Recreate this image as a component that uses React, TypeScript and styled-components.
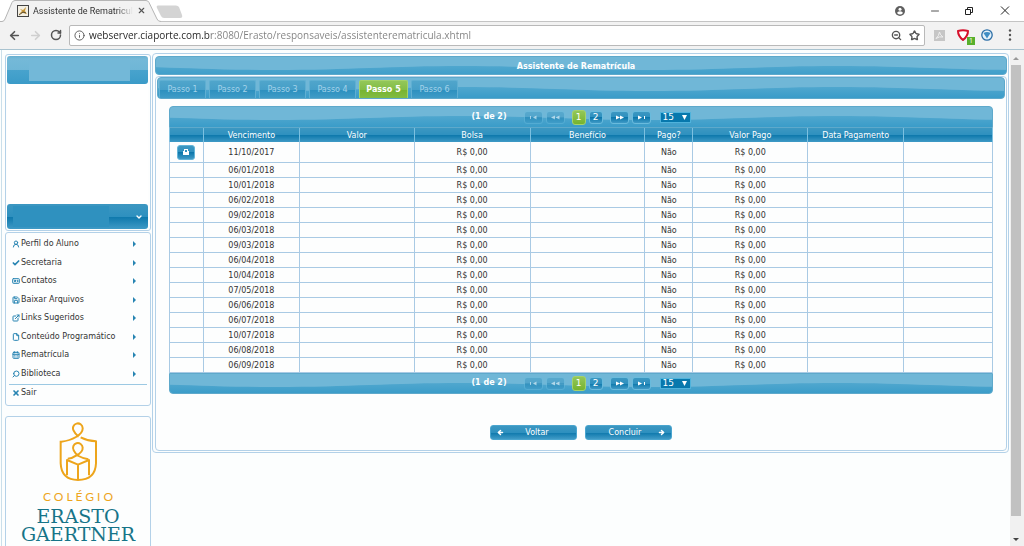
import React from "react";
import styled, { createGlobalStyle, css } from "styled-components";
import {
  ArrowLeft, ArrowRight, RotateCw, Info, ZoomOut, Star, UserRound, Check, IdCard, Save,
  ExternalLink, File, CalendarDays, Search, X, Minus, ChevronDown,
} from "lucide-react";

const ui = '"DejaVu Sans", Verdana, sans-serif';
const chromeUi = '"Open Sans", "Noto Sans", sans-serif';
const line = "#b3d1e8";

const Global = createGlobalStyle`
  *, *::before, *::after { box-sizing: border-box; }
  body { margin: 0; background: #fff; font: 8px/14px ${ui}; color: #333; overflow: hidden; }
  button, input, select { font: inherit; color: inherit; margin: 0; padding: 0; border: 0; background: none; }
  ul { list-style: none; margin: 0; padding: 0; }
  a { color: inherit; text-decoration: none; }
  svg { display: block; flex: none; }
`;

/* ---------- browser window ---------- */

const Window = styled.div`
  height: 100vh;
  display: flex;
  flex-direction: column;
`;

const TabStrip = styled.header`
  position: relative;
  height: 22px;
  flex: none;
  display: flex;
  align-items: center;
  justify-content: space-between;
  padding: 0 11px 0 17px;
  border-bottom: 1px solid #c4c4c4;
  background: #fff;
`;

const TabShape = styled.svg`
  position: absolute;
  left: 0;
  top: 0;
`;

const BrowserTab = styled.div`
  position: relative;
  display: flex;
  align-items: center;
  gap: 4px;
`;

const TabTitle = styled.span`
  width: 100px;
  white-space: nowrap;
  font: 9px/14px Roboto, sans-serif;
  color: #333;
  mask-image: linear-gradient(90deg, #000 84px, transparent);
`;

const IconButton = styled.button<{ $tone?: string }>`
  display: grid;
  place-items: center;
  flex: none;
  color: ${(p) => p.$tone ?? "#555"};
`;

const WindowButtons = styled.div`
  display: flex;
  align-items: center;
  gap: 24px;
`;

const Toolbar = styled.div`
  height: 28px;
  flex: none;
  display: flex;
  align-items: center;
  padding: 0 8px 1px;
  gap: 7px;
  background: #f2f2f2;
  border-bottom: 1px solid #a9c3d0;
`;

const AddressBar = styled.label`
  flex: 1;
  height: 21px;
  display: flex;
  align-items: center;
  gap: 4px;
  padding: 0 4px;
  background: #fff;
  border: 1px solid #b9b9b9;
  border-radius: 2px;
  color: #555;
`;

const AddressInput = styled.input`
  flex: 1;
  min-width: 0;
  height: 18px;
  outline: 0;
  font: 10px/18px ${chromeUi};
  color: transparent;
  background: linear-gradient(90deg, #222 122px, #808080 122px);
  background-clip: text;
  -webkit-background-clip: text;
`;

const NavButtons = styled.div`
  display: flex;
  align-items: center;
  gap: 8px;
`;

const AddressActions = styled.div`
  display: flex;
  align-items: center;
  gap: 7px;
`;

const Extensions = styled.div`
  display: flex;
  align-items: center;
  gap: 11px;
  margin-left: 2px;
`;

const ShieldButton = styled(IconButton)`
  position: relative;
`;

const Badge = styled.span`
  position: absolute;
  right: -5px;
  bottom: -4px;
  width: 8px;
  height: 8px;
  background: #58b02c;
  color: #fff;
  font: 7px/8px ${chromeUi};
`;

/* ---------- page frame ---------- */

const Viewport = styled.div`
  flex: 1;
  min-height: 0;
  display: flex;
  background: #fcfefe;
`;

const Page = styled.div`
  flex: 1;
  min-width: 0;
  display: flex;
  align-items: flex-start;
  gap: 1px;
  margin-left: 1px;
  padding: 3px 0 0 3px;
  border-left: 1px solid #cadfea;
`;

const Scrollbar = styled.div`
  width: 14px;
  margin-left: 1px;
  flex: none;
  display: flex;
  flex-direction: column;
  align-items: center;
  justify-content: space-between;
  padding: 7px 2px 5px 0;
  background: #f1f1f1;
`;

const Thumb = styled.div`
  flex: 1;
  width: 10px;
  margin: 5px 0 22px;
  background: #c1c1c1;
`;

const Sidebar = styled.aside`
  width: 146px;
  flex: none;
  padding-top: 1px;
  display: flex;
  flex-direction: column;
`;

const Panel = styled.section`
  border: 1px solid ${line};
  border-radius: 3px;
  padding: 1px 2px 1px 1px;
  background: #fdfefe;
`;

const glossLight = "linear-gradient(#66afd0 0, #74b9d8 3px, #6fb6d6 50%, #48a3cd 50%, #3b9bc8 100%)";
const glossDark = "linear-gradient(#3c97c1 0, #2e90bf 50%, #0c77ab 50%, #3f9ac6 100%)";

const StudentHeader = styled.div`
  height: 28px;
  padding: 3px 18px 3px 22px;
  border-radius: 3px;
  background: ${glossLight};
`;

const StudentName = styled.div`
  height: 22px;
  background: #73b8d8;
`;

const PhotoArea = styled.div`
  height: 120px;
  background: #fff;
`;

const StudentSelect = styled.button`
  display: flex;
  width: 100%;
  height: 25px;
  align-items: center;
  justify-content: space-between;
  padding: 0 5px 0 6px;
  border-radius: 3px;
  background: ${glossDark};
  color: #fff;
`;

const StudentValue = styled.span`
  width: 96px;
  height: 21px;
  background: #2f91bf;
`;

const MenuPanel = styled(Panel)`
  margin-top: 1px;
  padding: 2px 3px 4px;
`;

const MenuList = styled.ul`
  display: grid;
  grid-auto-rows: 1fr;
  min-height: 150px;
  padding-bottom: 1px;
  border-bottom: 1px solid #9cc9e3;
`;

const MenuLink = styled.a`
  display: flex;
  align-items: center;
  height: 100%;
  min-height: 16px;
  padding: 0 11px 0 3px;
  white-space: nowrap;
  svg { color: #2784b2; }
  span { flex: 1; padding-left: 1px; }
`;

const LogoPanel = styled(Panel)`
  margin-top: 10px;
  padding: 5px 0 10px;
  display: flex;
  flex-direction: column;
  align-items: center;
`;

const LogoSmall = styled.div`
  margin: 8px 0 3px;
  padding-left: 3px;
  font: 12px/14px Lato, sans-serif;
  letter-spacing: 3px;
  color: #eda51c;
`;

const LogoLarge = styled.div`
  font: 19px/18px "DejaVu Serif", serif;
  color: #167488;
`;

/* ---------- wizard ---------- */

const Main = styled.main`
  flex: 1;
  min-width: 0;
  border: 1px solid ${line};
  border-radius: 4px;
  padding: 2px 1px 1px 2px;
`;

const waveBar = css`
  position: relative;
  isolation: isolate;
  overflow: hidden;
  border: 1px solid #5ea9cb;
  background: #70b7d7;
  color: #fff;
`;

const TitleBar = styled.h1`
  ${waveBar}
  margin: 0 0 1px;
  padding-right: 10px;
  height: 19px;
  border-radius: 4px;
  font: bold 8px/20px ${ui};
  text-align: center;
`;

const WaveSvg = styled.svg`
  position: absolute;
  inset: 0;
  width: 100%;
  height: 100%;
  z-index: -1;
`;

const TabView = styled.div`
  border: 1px solid ${line};
  border-radius: 4px;
  padding: 0 1px;
  background: #fdfefe;
`;

const Steps = styled.ul`
  ${waveBar}
  display: flex;
  gap: 3px;
  height: 22px;
  padding: 2px 1px 0;
  border-radius: 4px;
`;

const StepTab = styled.button<{ $active?: boolean }>`
  width: 47px;
  height: 18px;
  border: 1px solid #5fafd2;
  border-bottom: 0;
  border-radius: 2px 2px 0 0;
  line-height: 17px;
  background: linear-gradient(#50a5cb 0, #469fc8 50%, #2b8fbe 50%, #3f9cc7 100%);
  color: #a3d2e9;
  ${(p) => p.$active && css`
    width: 49px;
    border-color: #a5d36a;
    background: linear-gradient(#93c759, #83bd46 50%, #76b32f 50%, #82bc43);
    color: #fff;
    font-weight: bold;
  `}
`;

const StepBody = styled.div`
  padding: 7px 12px 10px;
`;

const PagerBar = styled.nav<{ $foot?: boolean }>`
  ${waveBar}
  display: flex;
  align-items: center;
  justify-content: center;
  height: ${(p) => (p.$foot ? 21 : 22)}px;
  border-radius: ${(p) => (p.$foot ? "0 0 4px 4px" : "4px 4px 0 0")};
`;

const PagerText = styled.strong`
  margin-right: 17px;
`;

const PageGroup = styled.div<{ $after: number }>`
  display: flex;
  align-items: center;
  gap: 3px;
  margin-right: ${(p) => p.$after}px;
`;

const PagerButton = styled.button<{ $active?: boolean }>`
  display: grid;
  place-items: center;
  width: 19px;
  height: 13px;
  border: 1px solid #69bbdd;
  border-radius: 3px;
  background: ${glossDark};
  color: #fff;
  &:disabled { opacity: 0.45; }
`;

const PageNumber = styled(PagerButton)`
  width: 14px;
  height: ${(p) => (p.$active ? 15 : 13)}px;
  font-size: 9px;
  line-height: 11px;
  ${(p) => p.$active && css`
    border-color: #a5d36a;
    background: linear-gradient(#93c759, #76b32f);
  `}
`;

const SelectWrap = styled.span`
  position: relative;
  svg { position: absolute; right: 4px; top: 3px; pointer-events: none; }
`;

const RowsSelect = styled.select`
  display: block;
  appearance: none;
  width: 31px;
  height: 11px;
  padding-left: 2px;
  border: 1px solid #4fb3dc;
  background: #0778ad;
  font-size: 9px;
  line-height: 9px;
  color: #fff;
`;

const Table = styled.table`
  width: 100%;
  table-layout: fixed;
  border-collapse: collapse;
  text-align: center;
`;

const Th = styled.th`
  height: 14px;
  padding: 0;
  line-height: 13px;
  font-weight: normal;
  color: #fff;
  border: 1px solid #7cc0e0;
  border-width: 0 1px;
  background: ${glossDark};
`;

const Td = styled.td`
  height: 15px;
  padding: 1px 0 0;
  line-height: 13px;
  border: 1px solid #a9cae4;
  border-top: 0;
  tr:first-child > & { height: 20px; }
`;

const PrintButton = styled.button`
  display: grid;
  place-items: center;
  width: 18px;
  height: 15px;
  margin: 0 auto;
  border: 1px solid #62b4d8;
  border-radius: 3px;
  background: ${glossDark};
  color: #fff;
`;

const Actions = styled.div`
  display: flex;
  justify-content: center;
  gap: 8px;
  margin-top: 31px;
`;

const ActionButton = styled.button<{ $next?: boolean }>`
  display: flex;
  flex-direction: ${(p) => (p.$next ? "row-reverse" : "row")};
  align-items: center;
  width: 87px;
  height: 15px;
  padding: 0 6px;
  border: 1px solid #4aa5cf;
  border-radius: 3px;
  background: ${glossDark};
  color: #fff;
  span { flex: 1; line-height: 13px; }
`;

/* Glossy bar background: a repeating wave, anchored to the middle of the bar. */
function Wave({ id }: { id: string }) {
  return (
    <WaveSvg aria-hidden="true">
      <defs>
        <linearGradient id={`${id}-low`} x1="0" y1="0" x2="0" y2="20" gradientUnits="userSpaceOnUse">
          <stop offset="0.4" stopColor="#52a8cf" />
          <stop offset="1" stopColor="#3a9cc9" />
        </linearGradient>
        <pattern id={id} x="69" y="0" width="375" height="24" patternUnits="userSpaceOnUse">
          <path d="M0 13C75 13 115 9 187 9S300 13 375 13V24H0Z" fill={`url(#${id}-low)`} />
        </pattern>
      </defs>
      <svg x="50%" overflow="visible">
        <rect x="-2000" y="0" width="4000" height="24" fill={`url(#${id})`} />
      </svg>
    </WaveSvg>
  );
}

const Seek = ({ d }: { d: string }) => (
  <svg width="9" height="5" viewBox="0 0 9 5" fill="currentColor"><path d={d} /></svg>
);

function Pager({ id, foot }: { id: string; foot?: boolean }) {
  return (
    <PagerBar $foot={foot} aria-label="Paginação">
      <Wave id={id} />
      <PagerText>(1 de 2)</PagerText>
      <PageGroup $after={7}>
        <PagerButton disabled aria-label="Primeira"><Seek d="M1 1h1v3H1zM4 2.5L7.500 .5v4z" /></PagerButton>
        <PagerButton disabled aria-label="Anterior"><Seek d="M0 2.500L4 .5v4zM4.500 2.500L8.500 .5v4z" /></PagerButton>
      </PageGroup>
      <PageGroup $after={7}>
        <PageNumber $active>1</PageNumber>
        <PageNumber>2</PageNumber>
      </PageGroup>
      <PageGroup $after={9}>
        <PagerButton aria-label="Próxima"><Seek d="M1 .5L5 2.500L1 4.500zM5 .5L9 2.500L5 4.500z" /></PagerButton>
        <PagerButton aria-label="Última"><Seek d="M1 .5L5 2.500L1 4.500zM7 1h1v3H7z" /></PagerButton>
      </PageGroup>
      <SelectWrap>
        <RowsSelect aria-label="Linhas por página" defaultValue="15"><option>15</option></RowsSelect>
        <svg width="5" height="5" viewBox="0 0 5 5" fill="#fff"><path d="M0 0h5L2.500 5z" /></svg>
      </SelectWrap>
    </PagerBar>
  );
}

const menu = [
  { label: "Perfil do Aluno", Icon: UserRound },
  { label: "Secretaria", Icon: Check },
  { label: "Contatos", Icon: IdCard },
  { label: "Baixar Arquivos", Icon: Save },
  { label: "Links Sugeridos", Icon: ExternalLink },
  { label: "Conteúdo Programático", Icon: File },
  { label: "Rematrícula", Icon: CalendarDays },
  { label: "Biblioteca", Icon: Search },
];

const columns: [string, number][] = [
  ["", 34], ["Vencimento", 96], ["Valor", 115], ["Bolsa", 116], ["Benefício", 115],
  ["Pago?", 48], ["Valor Pago", 115], ["Data Pagamento", 96], ["", 89],
];
const totalWidth = columns.reduce((sum, c) => sum + c[1], 0);

const dates = [
  "11/10/2017", "06/01/2018", "10/01/2018", "06/02/2018", "09/02/2018", "06/03/2018",
  "09/03/2018", "06/04/2018", "10/04/2018", "07/05/2018", "06/06/2018", "06/07/2018",
  "10/07/2018", "06/08/2018", "06/09/2018",
];

export default function App() {
  return (
    <Window>
      <Global />
      <TabStrip>
        <TabShape width="190" height="22" viewBox="0 0 190 22">
          <path d="M0 21.500H2Q4 21.500 5 19L12 2.500Q13 .5 15 .5H146Q148 .5 149 2.500L157 19Q158 21.500 161 21.500V22H0Z" fill="#f2f2f2" />
          <path d="M0 21.500H2Q4 21.500 5 19L12 2.500Q13 .5 15 .5H146Q148 .5 149 2.500L157 19Q158 21.500 161 21.500" fill="none" stroke="#b5b5b5" />
          <path d="M158 5.500H176Q178 5.500 179 7L182 15Q183 18 180 18H164Q162 18 161 16L157 8Q156 5.500 158 5.500Z" fill="#d4d4d4" />
        </TabShape>
        <BrowserTab>
          <svg width="12" height="12" viewBox="0 0 12 12">
            <rect x=".5" y=".5" width="11" height="11" fill="#f4f0e4" stroke="#444" />
            <path d="M2 9L5 6L3 4L6 5L9 2L8 6L10 9L6 8Z" fill="#c9973a" />
            <path d="M2 10L6 7L9 8" fill="none" stroke="#5d5036" />
          </svg>
          <TabTitle>Assistente de Rematricul</TabTitle>
          <IconButton aria-label="Fechar guia"><X size={9} strokeWidth={3} /></IconButton>
        </BrowserTab>
        <WindowButtons>
          <IconButton aria-label="Perfil">
            <svg width="10" height="10" viewBox="0 0 20 20">
              <circle cx="10" cy="10" r="10" fill="#5f5f5f" />
              <circle cx="10" cy="6.500" r="3" fill="#fff" />
              <path d="M4 14Q5 10.500 10 10.500T16 14Q13 17 10 17T4 14Z" fill="#fff" />
            </svg>
          </IconButton>
          <IconButton aria-label="Minimizar"><Minus size={12} strokeWidth={2} /></IconButton>
          <IconButton aria-label="Restaurar" $tone="#222">
            <svg width="8" height="8" viewBox="0 0 8 8" fill="none" stroke="currentColor">
              <path d="M.5 2.500H5.500V7.500H.5ZM2.500 2.500V.5H7.500V5.500H5.500" />
            </svg>
          </IconButton>
          <IconButton aria-label="Fechar" $tone="#222">
            <svg width="16" height="9" viewBox="0 0 16 9" fill="none" stroke="currentColor">
              <path d="M4 .5L12 8.500M12 .5L4 8.500" />
            </svg>
          </IconButton>
        </WindowButtons>
      </TabStrip>

      <Toolbar>
        <NavButtons>
          <IconButton aria-label="Voltar página"><ArrowLeft size={13} strokeWidth={3} /></IconButton>
          <IconButton aria-label="Avançar página" $tone="#cfcfcf"><ArrowRight size={13} strokeWidth={3} /></IconButton>
          <IconButton aria-label="Recarregar"><RotateCw size={12} strokeWidth={3} /></IconButton>
        </NavButtons>
        <AddressBar>
          <Info size={11} strokeWidth={2} />
          <AddressInput
            aria-label="Endereço"
            defaultValue="webserver.ciaporte.com.br:8080/Erasto/responsaveis/assistenterematricula.xhtml"
          />
          <AddressActions>
            <ZoomOut size={11} strokeWidth={3} />
            <Star size={11} strokeWidth={3} />
          </AddressActions>
        </AddressBar>
        <Extensions>
          <IconButton aria-label="PDF">
            <svg width="11" height="11" viewBox="0 0 22 22">
              <rect width="22" height="22" fill="#c6c6c6" />
              <path d="M11 4Q12 10 18 14Q11 12 4 17Q10 12 11 4Z" fill="none" stroke="#efefef" strokeWidth="2" />
            </svg>
          </IconButton>
          <ShieldButton aria-label="Bloqueador">
            <svg width="14" height="12" viewBox="0 0 14 12">
              <path d="M2 2Q7 .5 12 2Q12 7 7 11Q2 7 2 2Z" fill="#fff" stroke="#d6102b" strokeWidth="2" strokeLinejoin="round" />
            </svg>
            <Badge>1</Badge>
          </ShieldButton>
          <IconButton aria-label="Extensão">
            <svg width="12" height="12" viewBox="0 0 12 12">
              <circle cx="6" cy="6" r="5.200" fill="#e6f2fa" stroke="#2b6ea6" strokeWidth="1.300" />
              <path d="M2.500 4Q6 2 9.500 4L6 9.500Z" fill="#3f8dc4" />
            </svg>
          </IconButton>
          <IconButton aria-label="Menu">
            <svg width="12" height="12" viewBox="0 0 12 12" fill="#555">
              <circle cx="6" cy="1.500" r="1.200" /><circle cx="6" cy="6" r="1.200" /><circle cx="6" cy="10.500" r="1.200" />
            </svg>
          </IconButton>
        </Extensions>
      </Toolbar>

      <Viewport>
        <Page>
          <Sidebar>
            <Panel>
              <StudentHeader><StudentName /></StudentHeader>
              <PhotoArea />
              <StudentSelect aria-label="Selecionar aluno">
                <StudentValue />
                <ChevronDown size={8} strokeWidth={4} />
              </StudentSelect>
            </Panel>
            <MenuPanel as="nav">
              <MenuList>
                {menu.map(({ label, Icon }) => (
                  <li key={label}>
                    <MenuLink href="#">
                      <Icon
                        size={8}
                        strokeWidth={label === "Secretaria" ? 5 : 3}
                        transform={label === "Biblioteca" ? "scale(-1 1)" : undefined}
                      />
                      <span>{label}</span>
                      <svg width="3" height="6" viewBox="0 0 3 6" fill="currentColor"><path d="M0 0L3 3L0 6Z" /></svg>
                    </MenuLink>
                  </li>
                ))}
              </MenuList>
              <MenuLink href="#">
                <X size={8} strokeWidth={5} />
                <span>Sair</span>
              </MenuLink>
            </MenuPanel>
            <LogoPanel>
              <svg width="40" height="60" viewBox="172 48 120 180" fill="none" stroke="#eda51c" strokeWidth="6" strokeLinejoin="round">
                <path d="M182 107Q208 104 226 93Q247 80 246 66A14.500 14.500 0 1 0 219 74Q223 84 234 92M240 94Q262 105 286 106V172Q284 222 232 222Q182 222 180 172V104" />
                <path d="M201 158Q214 158 226 149Q247 139 246 125A14.500 14.500 0 1 0 219 133Q223 142 234 150Q248 158 263 160" />
                <path d="M199 208V162L232 176L265 162V208M232 176V222" />
              </svg>
              <LogoSmall>COLÉGIO</LogoSmall>
              <LogoLarge>ERASTO</LogoLarge>
              <LogoLarge>GAERTNER</LogoLarge>
            </LogoPanel>
          </Sidebar>

          <Main>
            <TitleBar><Wave id="wave-title" />Assistente de Rematrícula</TitleBar>
            <TabView>
              <Steps>
                <Wave id="wave-steps" />
                {[1, 2, 3, 4, 5, 6].map((n) => (
                  <li key={n}><StepTab $active={n === 5}>Passo {n}</StepTab></li>
                ))}
              </Steps>
              <StepBody>
                <Pager id="wave-top" />
                <Table>
                  <colgroup>
                    {columns.map(([, w], i) => (
                      <col key={i} style={{ width: `${(w / totalWidth) * 100}%` }} />
                    ))}
                  </colgroup>
                  <thead>
                    <tr>{columns.map(([name], i) => <Th key={i}>{name}</Th>)}</tr>
                  </thead>
                  <tbody>
                    {dates.map((date, i) => (
                      <tr key={date}>
                        <Td>
                          {i === 0 && (
                            <PrintButton aria-label="Imprimir">
                              <svg width="6" height="6" viewBox="0 0 6 6" fill="currentColor">
                                <path d="M1 0H5V2H6V6H0V2H1ZM2 1V3H4V1Z" fillRule="evenodd" />
                              </svg>
                            </PrintButton>
                          )}
                        </Td>
                        <Td>{date}</Td>
                        <Td />
                        <Td>R$ 0,00</Td>
                        <Td />
                        <Td>Não</Td>
                        <Td>R$ 0,00</Td>
                        <Td />
                        <Td />
                      </tr>
                    ))}
                  </tbody>
                </Table>
                <Pager id="wave-foot" foot />
                <Actions>
                  <ActionButton><ArrowLeft size={7} strokeWidth={5} /><span>Voltar</span></ActionButton>
                  <ActionButton $next><ArrowRight size={7} strokeWidth={5} /><span>Concluir</span></ActionButton>
                </Actions>
              </StepBody>
            </TabView>
          </Main>
        </Page>
        <Scrollbar aria-hidden="true">
          <svg width="6" height="3" viewBox="0 0 6 3" fill="#999"><path d="M0 3L3 0L6 3Z" /></svg>
          <Thumb />
          <svg width="6" height="3" viewBox="0 0 6 3" fill="#444"><path d="M0 0H6L3 3Z" /></svg>
        </Scrollbar>
      </Viewport>
    </Window>
  );
}
